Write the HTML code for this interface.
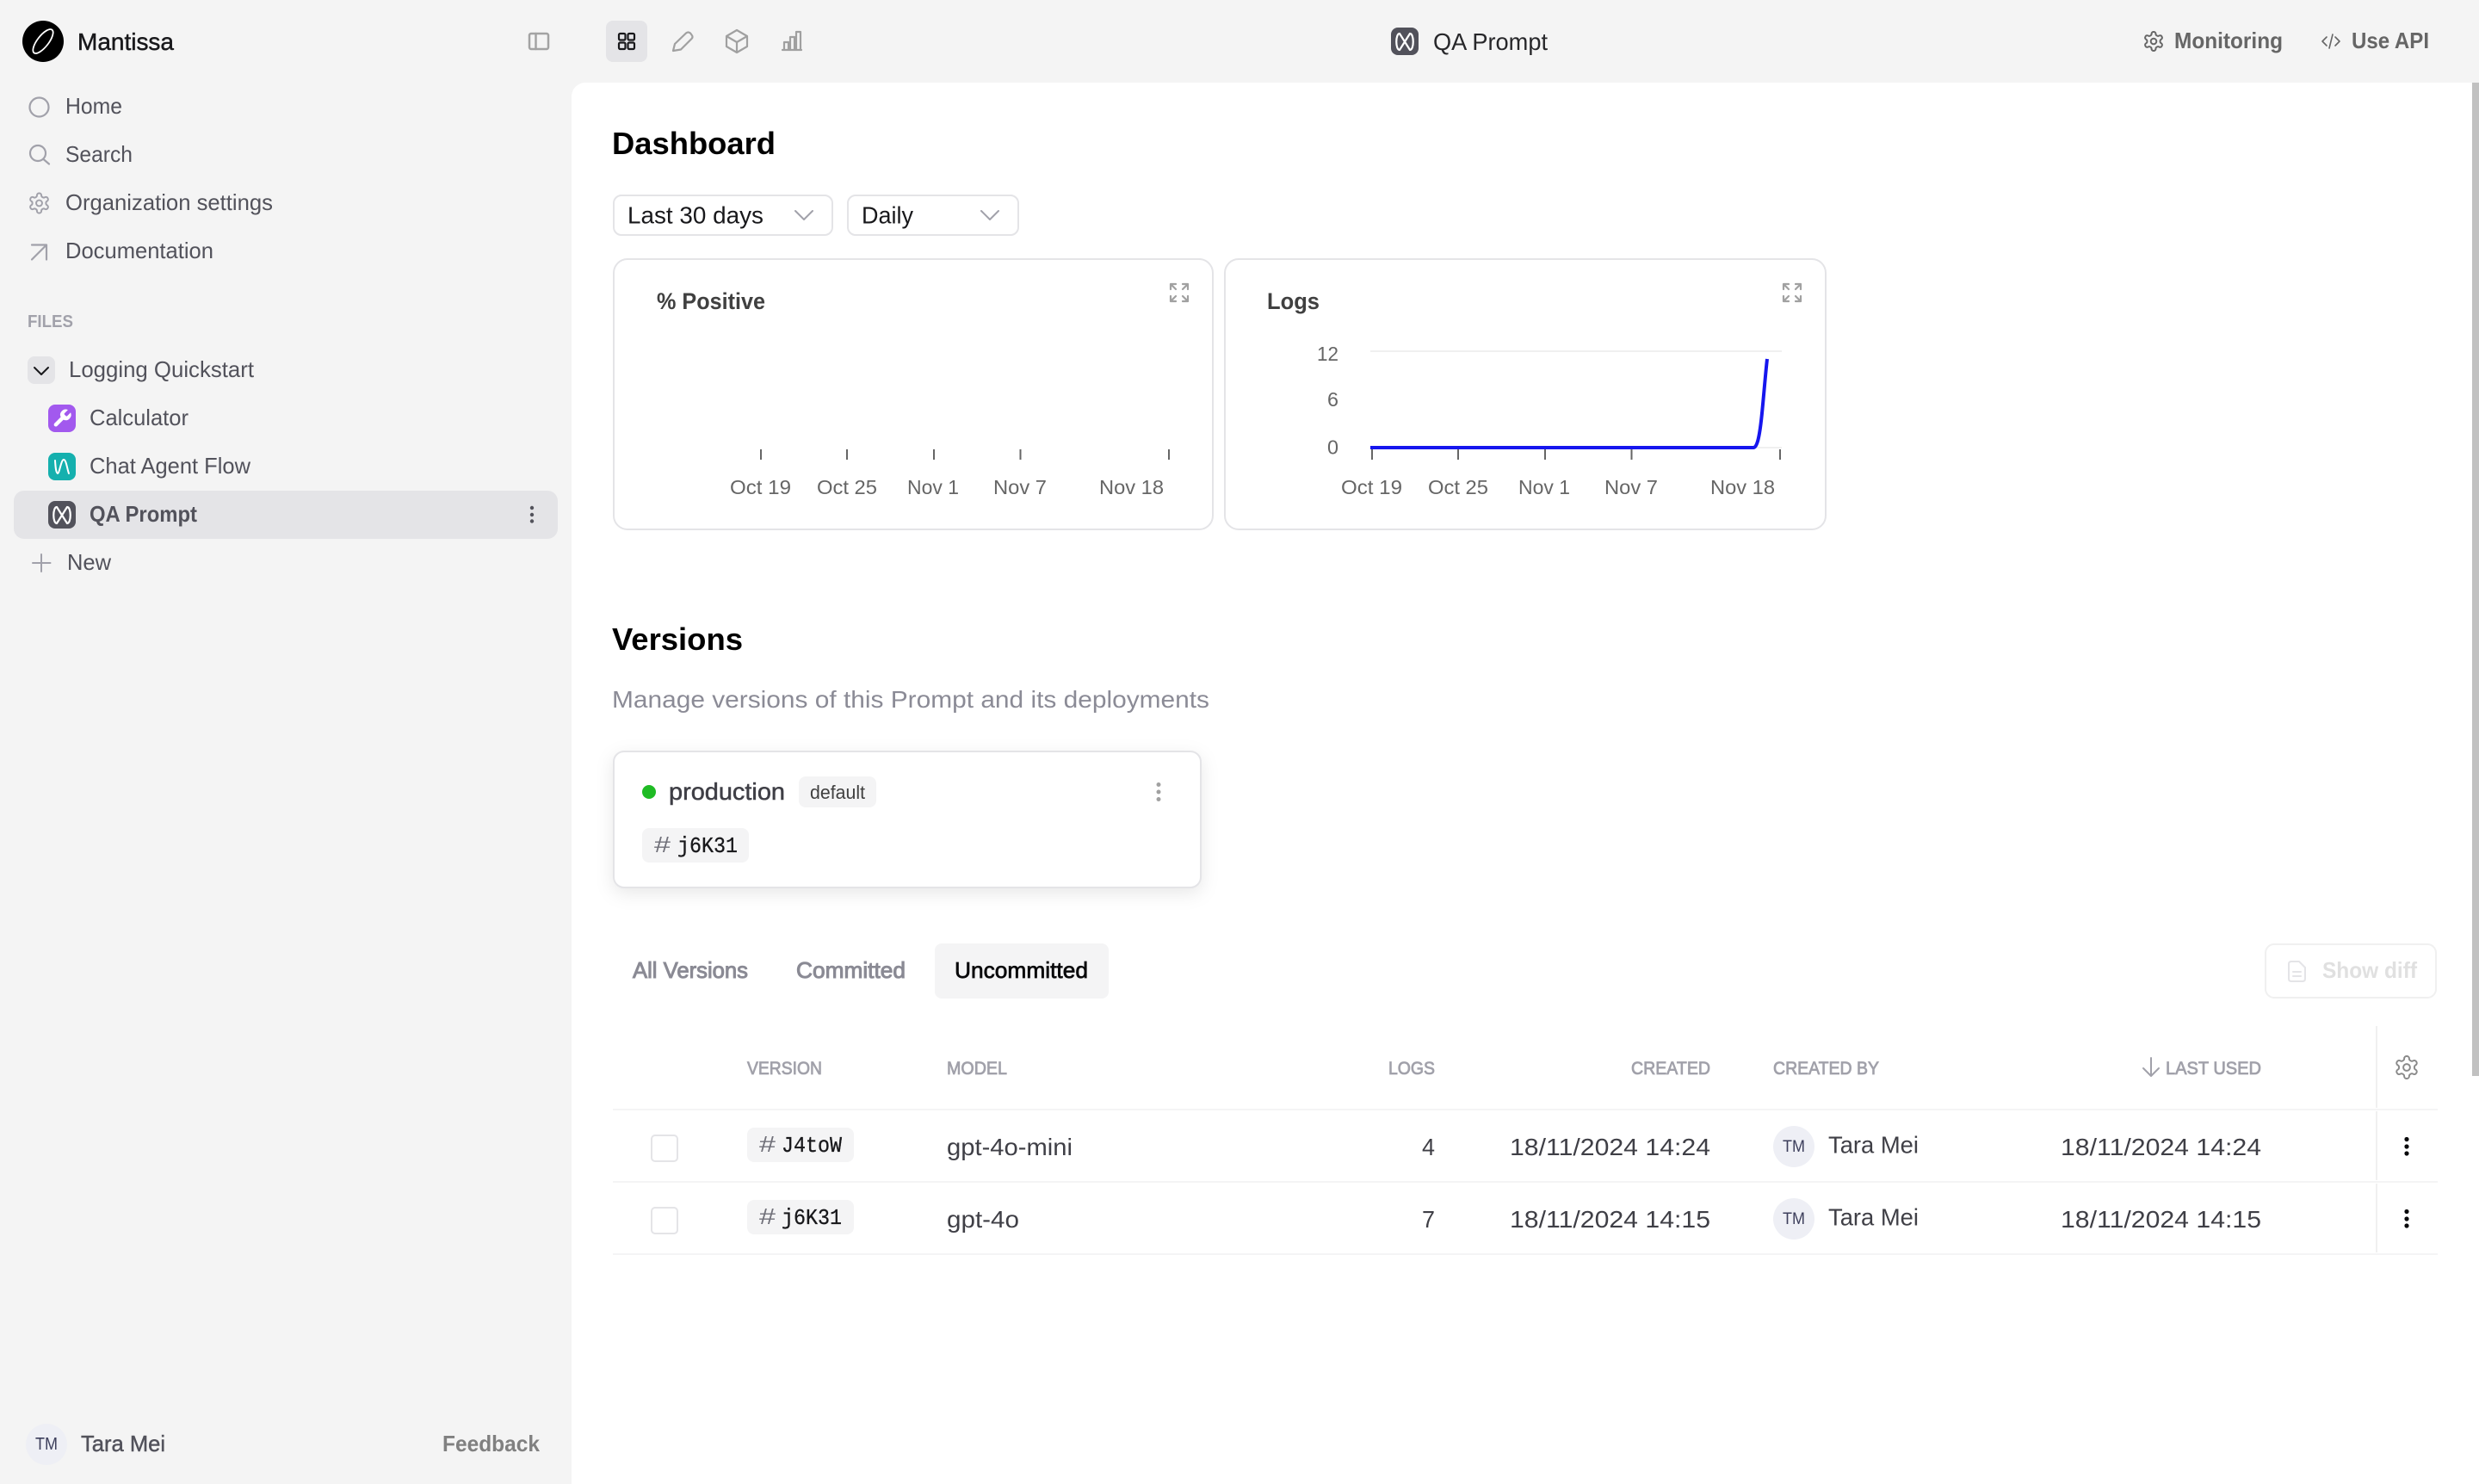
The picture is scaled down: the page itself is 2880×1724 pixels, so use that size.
<!DOCTYPE html>
<html lang="en">
<head>
<meta charset="utf-8">
<title>QA Prompt - Dashboard</title>
<style>
html,body{margin:0;padding:0;background:#f4f4f4;width:2880px;height:1724px;overflow:hidden}
svg{display:block;font-family:"Liberation Sans",sans-serif}
text{fill:currentColor}
.m{stroke:currentColor;stroke-width:.45}
.b{font-weight:700}
.mono{font-family:"Liberation Mono",monospace;stroke:currentColor;stroke-width:.3}
.nav{font-size:26px;color:#52525b}
.th{font-size:21px;color:#a1a1aa}
.ax{font-size:23px;color:#666}
.cell{font-size:28px;color:#3f3f46}
.ic{fill:none;stroke-linecap:round;stroke-linejoin:round}
</style>
</head>
<body>
<svg width="2880" height="1724" viewBox="0 0 2880 1724" xmlns="http://www.w3.org/2000/svg">
<defs>
<g id="gear"><path d="M12.22 2h-.44a2 2 0 0 0-2 2v.18a2 2 0 0 1-1 1.73l-.43.25a2 2 0 0 1-2 0l-.15-.08a2 2 0 0 0-2.73.73l-.22.38a2 2 0 0 0 .73 2.73l.15.1a2 2 0 0 1 1 1.72v.51a2 2 0 0 1-1 1.74l-.15.09a2 2 0 0 0-.73 2.73l.22.38a2 2 0 0 0 2.73.73l.15-.08a2 2 0 0 1 2 0l.43.25a2 2 0 0 1 1 1.73V20a2 2 0 0 0 2 2h.44a2 2 0 0 0 2-2v-.18a2 2 0 0 1 1-1.73l.43-.25a2 2 0 0 1 2 0l.15.08a2 2 0 0 0 2.73-.73l.22-.39a2 2 0 0 0-.73-2.73l-.15-.08a2 2 0 0 1-1-1.74v-.5a2 2 0 0 1 1-1.74l.15-.09a2 2 0 0 0 .73-2.73l-.22-.38a2 2 0 0 0-2.73-.73l-.15.08a2 2 0 0 1-2 0l-.43-.25a2 2 0 0 1-1-1.73V4a2 2 0 0 0-2-2z"/><circle cx="12" cy="12" r="3"/></g>
<g id="xi"><rect width="32" height="32" rx="8" fill="#52525b"/><path d="M10 7C5 7 5 26 10 26L22 7C27 7 27 26 22 26L10 7Z" fill="none" stroke="#fff" stroke-width="2.200" stroke-linejoin="round"/></g>
<g id="expand" fill="none" stroke="#a1a1a1" stroke-width="2.200" stroke-linecap="round" stroke-linejoin="round"><path d="M1 7V1H7M1 1L7 7M15 1H21V7M21 1L15 7M1 15V21H7M1 21L7 15M21 15V21H15M21 21L15 15"/></g>
</defs>

<!-- app background and main panel -->
<rect width="2880" height="1724" fill="#f4f4f4"/>
<path d="M664 112a16 16 0 0 1 16-16H2880V1724H664Z" fill="#fff"/>
<rect x="2872" y="96" width="8" height="1154" fill="#c1c1c1"/>

<!-- sidebar header -->
<circle cx="50" cy="48" r="24" fill="#000"/>
<ellipse cx="50" cy="48" rx="17" ry="6.500" transform="rotate(-52 50 48)" fill="none" stroke="#fff" stroke-width="1.800"/>
<text x="90" y="58" font-size="28" class="m" style="color:#18181b" textLength="112" lengthAdjust="spacingAndGlyphs">Mantissa</text>
<g class="ic" stroke="#a3a3a3" stroke-width="2.500"><rect x="615" y="39" width="22" height="18" rx="2"/><path d="M622.500 39V57"/></g>

<!-- sidebar nav -->
<g class="ic" stroke="#a1a1aa" stroke-width="2.200">
<circle cx="45.500" cy="124.500" r="11"/>
<circle cx="44" cy="178" r="9"/><path d="M50.500 185L57 190.500"/>
<use href="#gear" transform="translate(31.700 222.200) scale(1.150)" stroke-width="1.700"/>
<path d="M37 301.500L54 284.500M37 284.500H54V301.500"/>
</g>
<text x="76" y="132" class="nav" textLength="66" lengthAdjust="spacingAndGlyphs">Home</text>
<text x="76" y="188" class="nav" textLength="78" lengthAdjust="spacingAndGlyphs">Search</text>
<text x="76" y="244" class="nav" textLength="241" lengthAdjust="spacingAndGlyphs">Organization settings</text>
<text x="76" y="300" class="nav" textLength="172" lengthAdjust="spacingAndGlyphs">Documentation</text>

<!-- files -->
<text x="32" y="380" font-size="20" class="b" style="color:#a1a1aa" textLength="53" lengthAdjust="spacingAndGlyphs">FILES</text>
<rect x="32" y="414" width="32" height="32" rx="8" fill="#e4e4e7"/>
<path d="M40 427L48 435L56 427" class="ic" stroke="#18181b" stroke-width="2"/>
<text x="80" y="438" class="nav" textLength="215" lengthAdjust="spacingAndGlyphs">Logging Quickstart</text>

<rect x="56" y="470" width="32" height="32" rx="8" fill="#a259ee"/>
<path transform="translate(59.500 473.500) scale(1.050)" fill="#fff" d="M14.700 6.300a1 1 0 0 0 0 1.400l1.600 1.600a1 1 0 0 0 1.400 0l3.770-3.770a6 6 0 0 1-7.940 7.940l-6.910 6.910a2.120 2.120 0 0 1-3-3l6.910-6.910a6 6 0 0 1 7.940-7.940l-3.760 3.760z"/>
<text x="104" y="494" class="nav" textLength="115" lengthAdjust="spacingAndGlyphs">Calculator</text>

<rect x="56" y="526" width="32" height="32" rx="8" fill="#15b0ae"/>
<path d="M64 535C64.500 543 65 549 67 550C69 550 71 534 74 534C77 534 78 545 80 550" fill="none" stroke="#fff" stroke-width="2" stroke-linecap="round"/>
<text x="104" y="550" class="nav" textLength="187" lengthAdjust="spacingAndGlyphs">Chat Agent Flow</text>

<rect x="16" y="570" width="632" height="56" rx="12" fill="#e4e4e7"/>
<use href="#xi" x="56" y="582"/>
<text x="104" y="606" font-size="26" class="b" style="color:#52525b" textLength="125" lengthAdjust="spacingAndGlyphs">QA Prompt</text>
<g fill="#52525b"><circle cx="618" cy="590" r="2.200"/><circle cx="618" cy="598" r="2.200"/><circle cx="618" cy="605.500" r="2.200"/></g>

<path d="M38 654H58.500M48 644V664" class="ic" stroke="#a1a1aa" stroke-width="2"/>
<text x="78" y="662" class="nav" textLength="51" lengthAdjust="spacingAndGlyphs">New</text>

<!-- sidebar footer -->
<circle cx="54" cy="1678" r="24" fill="#eeeff5"/>
<text x="41" y="1684" font-size="20" style="color:#3d3f5c" textLength="26" lengthAdjust="spacingAndGlyphs">TM</text>
<text x="94" y="1686" font-size="26" class="m" style="color:#52525b" textLength="98" lengthAdjust="spacingAndGlyphs">Tara Mei</text>
<text x="514" y="1686" font-size="26" class="b" style="color:#808080" textLength="113" lengthAdjust="spacingAndGlyphs">Feedback</text>

<!-- top bar -->
<rect x="704" y="24" width="48" height="48" rx="8" fill="#e4e4e7"/>
<g fill="none" stroke="#18181b" stroke-width="2.200"><rect x="719" y="39" width="7.500" height="7.500" rx="1.500"/><rect x="729.500" y="39" width="7.500" height="7.500" rx="1.500"/><rect x="719" y="49.500" width="7.500" height="7.500" rx="1.500"/><rect x="729.500" y="49.500" width="7.500" height="7.500" rx="1.500"/></g>
<g class="ic" stroke="#a0a0a0" stroke-width="2.200">
<path d="M782 59L784 51L797 38.500Q799.500 36.500 802 38.500L803.500 40.500Q805.500 43 803.500 45L791 57.500Z"/>
<path d="M856 35L868 42V54L856 61L844 54V42ZM844 42L856 49L868 42M856 49V61"/>
<path d="M909 58H931M911 58V49H916V58M918 58V43H923V58M925 58V37H930V58"/>
</g>
<use href="#xi" x="1616" y="32"/>
<text x="1665" y="58" font-size="28" style="color:#27272a" textLength="133" lengthAdjust="spacingAndGlyphs">QA Prompt</text>

<use href="#gear" transform="translate(2488.800 34.800) scale(1.100)" class="ic" stroke="#666" stroke-width="1.800"/>
<text x="2526" y="56" font-size="26" class="b" style="color:#666" textLength="126" lengthAdjust="spacingAndGlyphs">Monitoring</text>
<path d="M2703 43L2698 48L2703 53M2713 43L2718 48L2713 53M2710 40L2706 56" class="ic" stroke="#666" stroke-width="1.600"/>
<text x="2732" y="56" font-size="26" class="b" style="color:#666" textLength="90" lengthAdjust="spacingAndGlyphs">Use API</text>

<!-- dashboard -->
<text x="711" y="179" font-size="36" class="b" style="color:#000" textLength="190" lengthAdjust="spacingAndGlyphs">Dashboard</text>
<rect x="713" y="227" width="254" height="46" rx="9" fill="#fff" stroke="#e4e4e7" stroke-width="2"/>
<text x="729" y="259.500" font-size="28" style="color:#18181b" textLength="158" lengthAdjust="spacingAndGlyphs">Last 30 days</text>
<path d="M924 245L934 255L944 245" class="ic" stroke="#a1a1aa" stroke-width="2"/>
<rect x="985" y="227" width="198" height="46" rx="9" fill="#fff" stroke="#e4e4e7" stroke-width="2"/>
<text x="1001" y="259.500" font-size="28" style="color:#18181b" textLength="60" lengthAdjust="spacingAndGlyphs">Daily</text>
<path d="M1140 245L1150 255L1160 245" class="ic" stroke="#a1a1aa" stroke-width="2"/>

<!-- card: % positive -->
<rect x="713" y="301" width="696" height="314" rx="16" fill="#fff" stroke="#e4e4e7" stroke-width="2"/>
<text x="763" y="359" font-size="27" class="b" style="color:#404040" textLength="126" lengthAdjust="spacingAndGlyphs">% Positive</text>
<use href="#expand" x="1359" y="329"/>
<path d="M884 522V534M984 522V534M1085 522V534M1185.500 522V534M1358 522V534" stroke="#666" stroke-width="2"/>
<g class="ax">
<text x="848" y="574" textLength="71" lengthAdjust="spacingAndGlyphs">Oct 19</text>
<text x="949" y="574" textLength="70" lengthAdjust="spacingAndGlyphs">Oct 25</text>
<text x="1054" y="574" textLength="60" lengthAdjust="spacingAndGlyphs">Nov 1</text>
<text x="1154" y="574" textLength="62" lengthAdjust="spacingAndGlyphs">Nov 7</text>
<text x="1277" y="574" textLength="75" lengthAdjust="spacingAndGlyphs">Nov 18</text>
</g>

<!-- card: logs -->
<rect x="1423" y="301" width="698" height="314" rx="16" fill="#fff" stroke="#e4e4e7" stroke-width="2"/>
<text x="1472" y="359" font-size="27" class="b" style="color:#404040" textLength="61" lengthAdjust="spacingAndGlyphs">Logs</text>
<use href="#expand" x="2071" y="329"/>
<path d="M1592 408H2070M1592 520H2070" stroke="#f0f0f0" stroke-width="2"/>
<path d="M1594 522V534M1694 522V534M1795 522V534M1895.500 522V534M2068 522V534" stroke="#666" stroke-width="2"/>
<path d="M1592 520H2037C2041 520 2044 510 2047 480C2049 460 2051 435 2053 417" fill="none" stroke="#1616ee" stroke-width="4"/>
<g class="ax">
<text x="1530" y="419" textLength="25" lengthAdjust="spacingAndGlyphs">12</text>
<text x="1542" y="472" textLength="13" lengthAdjust="spacingAndGlyphs">6</text>
<text x="1542" y="527.500" textLength="13" lengthAdjust="spacingAndGlyphs">0</text>
<text x="1558" y="574" textLength="71" lengthAdjust="spacingAndGlyphs">Oct 19</text>
<text x="1659" y="574" textLength="70" lengthAdjust="spacingAndGlyphs">Oct 25</text>
<text x="1764" y="574" textLength="60" lengthAdjust="spacingAndGlyphs">Nov 1</text>
<text x="1864" y="574" textLength="62" lengthAdjust="spacingAndGlyphs">Nov 7</text>
<text x="1987" y="574" textLength="75" lengthAdjust="spacingAndGlyphs">Nov 18</text>
</g>

<!-- versions -->
<text x="711" y="755" font-size="36" class="b" style="color:#000" textLength="152" lengthAdjust="spacingAndGlyphs">Versions</text>
<text x="711" y="822" font-size="28" style="color:#8b8b96" textLength="694" lengthAdjust="spacingAndGlyphs">Manage versions of this Prompt and its deployments</text>

<rect x="713" y="873" width="682" height="158" rx="12" fill="#fff" stroke="#e4e4e7" stroke-width="2" style="filter:drop-shadow(0 6px 10px rgba(0,0,0,.09))"/>
<circle cx="754" cy="920" r="8" fill="#1fbb24"/>
<text x="777" y="929" font-size="28" class="m" style="color:#3f3f46;stroke-width:.5" textLength="135" lengthAdjust="spacingAndGlyphs">production</text>
<rect x="928" y="902" width="90" height="36" rx="8" fill="#f4f4f5"/>
<text x="941" y="928" font-size="22" style="color:#404040" textLength="64" lengthAdjust="spacingAndGlyphs">default</text>
<g fill="#a1a1a1"><circle cx="1346" cy="911.500" r="2.500"/><circle cx="1346" cy="920" r="2.500"/><circle cx="1346" cy="928.500" r="2.500"/></g>
<rect x="746" y="962" width="124" height="40" rx="8" fill="#f4f4f5"/>
<text x="760" y="990" font-size="26" style="color:#71717a" textLength="19" lengthAdjust="spacingAndGlyphs">#</text>
<text x="787" y="990" font-size="26" class="mono" style="color:#18181b" textLength="70" lengthAdjust="spacingAndGlyphs">j6K31</text>

<!-- tabs -->
<text x="735" y="1136" font-size="26" class="m" style="color:#8a8a94;stroke-width:1" textLength="134" lengthAdjust="spacingAndGlyphs">All Versions</text>
<text x="925" y="1136" font-size="26" class="m" style="color:#8a8a94;stroke-width:1" textLength="127" lengthAdjust="spacingAndGlyphs">Committed</text>
<rect x="1086" y="1096" width="202" height="64" rx="8" fill="#f4f4f5"/>
<text x="1109" y="1136" font-size="26" class="m" style="color:#09090b;stroke-width:.7" textLength="155" lengthAdjust="spacingAndGlyphs">Uncommitted</text>

<rect x="2632" y="1097" width="198" height="62" rx="10" fill="#fff" stroke="#f0f0f0" stroke-width="2"/>
<path d="M2662 1117H2671L2678 1124V1137Q2678 1140 2675 1140H2662Q2659 1140 2659 1137V1120Q2659 1117 2662 1117ZM2664 1129H2673M2664 1134H2673" class="ic" stroke="#e4e4e7" stroke-width="2"/>
<text x="2698" y="1136" font-size="26" class="b" style="color:#e0e0e0" textLength="110" lengthAdjust="spacingAndGlyphs">Show diff</text>

<!-- table -->
<path d="M712 1289H2832M712 1373H2832M712 1457H2832" stroke="#f4f4f5" stroke-width="2"/>
<path d="M2761 1192V1287M2761 1291V1371M2761 1375V1455" stroke="#f0f0f0" stroke-width="2"/>
<g class="th">
<text x="868" y="1248" class="m" style="stroke-width:.8" textLength="87" lengthAdjust="spacingAndGlyphs">VERSION</text>
<text x="1100" y="1248" class="m" style="stroke-width:.8" textLength="70" lengthAdjust="spacingAndGlyphs">MODEL</text>
<text x="1613" y="1248" class="m" style="stroke-width:.8" textLength="54" lengthAdjust="spacingAndGlyphs">LOGS</text>
<text x="1895" y="1248" class="m" style="stroke-width:.8" textLength="92" lengthAdjust="spacingAndGlyphs">CREATED</text>
<text x="2060" y="1248" class="m" style="stroke-width:.8" textLength="123" lengthAdjust="spacingAndGlyphs">CREATED BY</text>
<text x="2516" y="1248" class="m" style="stroke-width:.8" textLength="111" lengthAdjust="spacingAndGlyphs">LAST USED</text>
</g>
<path d="M2499 1229V1250M2490 1241L2499 1250L2508 1241" class="ic" stroke="#a1a1aa" stroke-width="2"/>
<use href="#gear" transform="translate(2780.400 1224.400) scale(1.300)" class="ic" stroke="#8a8a8a" stroke-width="1.500"/>

<!-- row 1 -->
<rect x="757" y="1319" width="30" height="30" rx="4" fill="#fff" stroke="#e4e4e7" stroke-width="2"/>
<rect x="868" y="1310" width="124" height="40" rx="8" fill="#f4f4f5"/>
<text x="882" y="1338" font-size="26" style="color:#71717a" textLength="19" lengthAdjust="spacingAndGlyphs">#</text>
<text x="908" y="1338" font-size="26" class="mono" style="color:#18181b" textLength="70" lengthAdjust="spacingAndGlyphs">J4toW</text>
<text x="1100" y="1342" class="cell" textLength="146" lengthAdjust="spacingAndGlyphs">gpt-4o-mini</text>
<text x="1652" y="1342" class="cell" textLength="15" lengthAdjust="spacingAndGlyphs">4</text>
<text x="1754" y="1342" class="cell" textLength="233" lengthAdjust="spacingAndGlyphs">18/11/2024 14:24</text>
<circle cx="2084" cy="1332" r="24" fill="#eeeff5"/>
<text x="2071" y="1338" font-size="19" style="color:#3d3f5c" textLength="26" lengthAdjust="spacingAndGlyphs">TM</text>
<text x="2124" y="1339.500" class="cell" textLength="105" lengthAdjust="spacingAndGlyphs">Tara Mei</text>
<text x="2394" y="1342" class="cell" textLength="233" lengthAdjust="spacingAndGlyphs">18/11/2024 14:24</text>
<g fill="#09090b"><circle cx="2796" cy="1323.500" r="2.600"/><circle cx="2796" cy="1332" r="2.600"/><circle cx="2796" cy="1340" r="2.600"/></g>

<!-- row 2 -->
<rect x="757" y="1403" width="30" height="30" rx="4" fill="#fff" stroke="#e4e4e7" stroke-width="2"/>
<rect x="868" y="1394" width="124" height="40" rx="8" fill="#f4f4f5"/>
<text x="882" y="1422" font-size="26" style="color:#71717a" textLength="19" lengthAdjust="spacingAndGlyphs">#</text>
<text x="908" y="1422" font-size="26" class="mono" style="color:#18181b" textLength="70" lengthAdjust="spacingAndGlyphs">j6K31</text>
<text x="1100" y="1426" class="cell" textLength="84" lengthAdjust="spacingAndGlyphs">gpt-4o</text>
<text x="1652" y="1426" class="cell" textLength="15" lengthAdjust="spacingAndGlyphs">7</text>
<text x="1754" y="1426" class="cell" textLength="233" lengthAdjust="spacingAndGlyphs">18/11/2024 14:15</text>
<circle cx="2084" cy="1416" r="24" fill="#eeeff5"/>
<text x="2071" y="1422" font-size="19" style="color:#3d3f5c" textLength="26" lengthAdjust="spacingAndGlyphs">TM</text>
<text x="2124" y="1423.500" class="cell" textLength="105" lengthAdjust="spacingAndGlyphs">Tara Mei</text>
<text x="2394" y="1426" class="cell" textLength="233" lengthAdjust="spacingAndGlyphs">18/11/2024 14:15</text>
<g fill="#09090b"><circle cx="2796" cy="1407.500" r="2.600"/><circle cx="2796" cy="1416" r="2.600"/><circle cx="2796" cy="1424" r="2.600"/></g>
</svg>
</body>
</html>
